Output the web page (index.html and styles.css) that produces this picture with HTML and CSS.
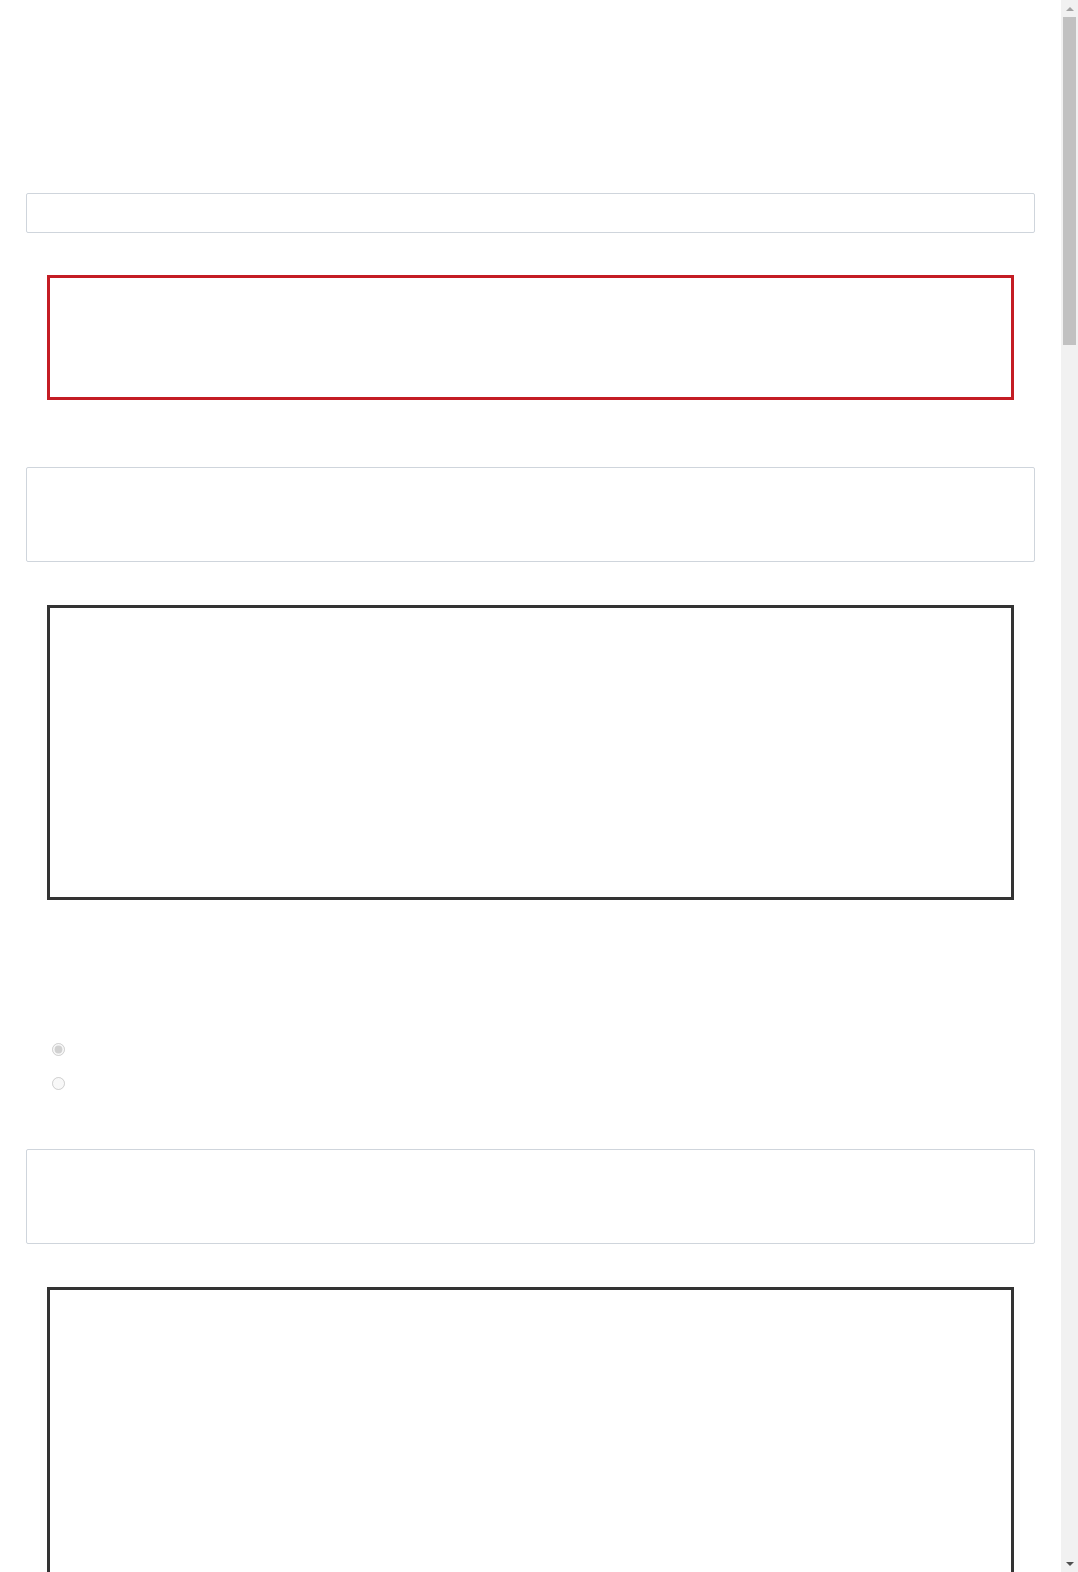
FILE: index.html
```html
<!DOCTYPE html>
<html lang="en">
<head>
  <meta charset="UTF-8" />
  <meta name="viewport" content="width=device-width, initial-scale=1.0"/>
  <title>Form</title>
  <link rel="stylesheet" href="styles.css">
</head>
<body>
  <form class="page">
    <input type="text" class="text-field" />
    <div class="alert-box"></div>

    <textarea class="text-area"></textarea>
    <div class="preview"></div>

    <div class="choices">
      <label class="choice"><input type="radio" name="mode1" checked disabled /></label>
      <label class="choice"><input type="radio" name="mode1" disabled /></label>
    </div>
    <textarea class="text-area"></textarea>
    <div class="preview"></div>

    <div class="choices">
      <label class="choice"><input type="radio" name="mode2" checked disabled /></label>
      <label class="choice"><input type="radio" name="mode2" disabled /></label>
    </div>
    <textarea class="text-area"></textarea>
    <div class="preview"></div>

    <div class="choices">
      <label class="choice"><input type="radio" name="mode3" checked disabled /></label>
      <label class="choice"><input type="radio" name="mode3" disabled /></label>
    </div>
    <textarea class="text-area"></textarea>
    <div class="preview"></div>

    <div class="choices">
      <label class="choice"><input type="radio" name="mode4" checked disabled /></label>
      <label class="choice"><input type="radio" name="mode4" disabled /></label>
    </div>
    <textarea class="text-area"></textarea>
    <div class="preview"></div>
  </form>

  <!-- page scrollbar, drawn by hand -->
  <div class="scrollbar" aria-hidden="true">
    <div class="scroll-btn up"></div>
    <div class="scroll-thumb"></div>
    <div class="scroll-track"></div>
    <div class="scroll-btn down"></div>
  </div>
</body>
</html>
```

FILE: styles.css
```css
body {
  margin: 0;
  background: #fff;
  font-family: 'Liberation Sans', Arial, sans-serif;
  color: #333;
}

.page {
  display: flex;
  flex-direction: column;
  padding: 193px 26px 380px;
  margin-right: 17px;
}

.text-field, .text-area {
  display: block;
  box-sizing: border-box;
  width: 100%;
  margin: 0;
  border: 1px solid #cfd5dc;
  border-radius: 2px;
  background: #fff;
  font: inherit;
}

.text-field {
  height: 40px;
  margin-bottom: 42px;
}

.text-area {
  height: 95px;
  resize: none;
  margin-bottom: 43px;
}

.alert-box {
  height: 125px;
  box-sizing: border-box;
  margin: 0 21px 67px;
  border: 3px solid #c41d24;
}

.preview {
  height: 295px;
  box-sizing: border-box;
  margin: 0 21px;
  border: 3px solid #333;
}

.choices {
  margin: 132px 21px 49px;
}

.choice {
  display: flex;
  align-items: center;
  height: 34px;
}

.choice input {
  margin: 0 0 0 5px;
}

/* scrollbar */
.scrollbar {
  position: fixed;
  top: 0;
  right: 0;
  width: 17px;
  height: 100vh;
  display: flex;
  flex-direction: column;
  background: #f1f1f1;
}

.scroll-btn {
  height: 17px;
  display: flex;
  align-items: center;
  justify-content: center;
}

.scroll-btn.up::before {
  content: "";
  border-left: 4px solid transparent;
  border-right: 4px solid transparent;
  border-bottom: 4px solid #a3a3a3;
  margin-top: 1px;
}

.scroll-btn.down::before {
  content: "";
  border-left: 4px solid transparent;
  border-right: 4px solid transparent;
  border-top: 4px solid #505050;
}

.scroll-thumb {
  height: 328px;
  margin: 0 2px;
  background: #c1c1c1;
}

.scroll-track {
  flex: 1;
}
```
